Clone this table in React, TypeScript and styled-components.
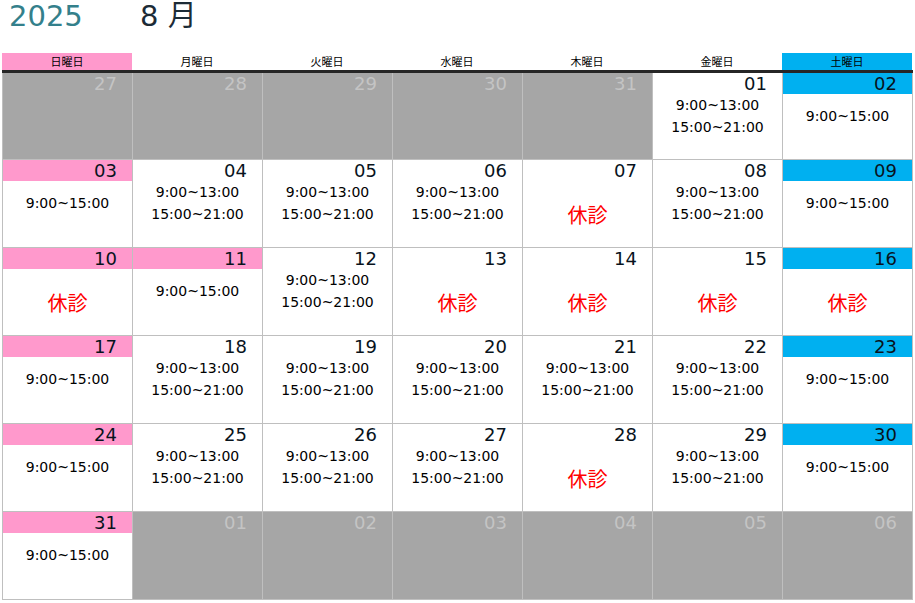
import React from "react";
import styled, { createGlobalStyle } from "styled-components";

const Global = createGlobalStyle`
  html, body { margin: 0; padding: 0; background: #ffffff; }
  body { font-family: "DejaVu Sans", "Noto Sans CJK JP", sans-serif; }
`;

const Page = styled.div`
  width: 915px;
  height: 603px;
  overflow: hidden;
  background: #fff;
`;

const Title = styled.div`
  height: 53px;
  display: flex;
  align-items: flex-start;
  padding-left: 9px;
  box-sizing: border-box;
`;

const Year = styled.span`
  font-family: "DejaVu Sans", sans-serif;
  font-size: 29px;
  line-height: 32px;
  color: #34808b;
  width: 131px;
`;

const Month = styled.span`
  font-family: "DejaVu Sans", "Noto Sans CJK JP", sans-serif;
  font-size: 29px;
  line-height: 32px;
  color: #1c2b36;
`;

const Calendar = styled.div`
  margin-left: 2px;
  width: 911px;
`;

const HeaderRow = styled.div`
  display: grid;
  grid-template-columns: repeat(7, 130px);
  height: 17px;
  border-bottom: 3px solid #262626;
`;

type Tone = "sun" | "sat" | "plain";

const toneBg = (t: Tone) => (t === "sun" ? "#ff99cc" : t === "sat" ? "#00b0f0" : "transparent");

const HeaderCell = styled.div<{ $tone: Tone }>`
  background: ${(p) => toneBg(p.$tone)};
  font-family: "Noto Sans CJK JP", sans-serif;
  font-size: 11px;
  line-height: 17px;
  text-align: center;
  color: #000;
`;

const Grid = styled.div`
  display: grid;
  grid-template-columns: repeat(7, 129px);
  grid-template-rows: 86px repeat(5, 87px);
  gap: 1px;
  background: #bfbfbf;
  border: 1px solid #bfbfbf;
  border-top: none;
`;

const Cell = styled.div<{ $out: boolean }>`
  background: ${(p) => (p.$out ? "#a6a6a6" : "#ffffff")};
  display: flex;
  flex-direction: column;
`;

const DayBand = styled.div<{ $tone: Tone; $out: boolean }>`
  height: 21px;
  background: ${(p) => (p.$out ? "transparent" : toneBg(p.$tone))};
  color: ${(p) => (p.$out ? "#c4c4c4" : "#08131c")};
  font-family: "DejaVu Sans", sans-serif;
  font-size: 18px;
  line-height: 21px;
  text-align: right;
  padding-right: 15px;
  flex-shrink: 0;
`;

const Times = styled.div`
  height: 44px;
  display: flex;
  flex-direction: column;
  justify-content: center;
  align-items: center;
  font-family: "DejaVu Sans", sans-serif;
  font-size: 14px;
  line-height: 22px;
  color: #000;
`;

const Closed = styled.div`
  flex: 1;
  display: flex;
  align-items: center;
  justify-content: center;
  font-family: "Noto Sans CJK JP", sans-serif;
  font-size: 20px;
  color: #ff0000;
`;

type Kind = "out" | "two" | "one" | "closed";
type Day = { n: string; k: Kind };

const weekdays: { label: string; tone: Tone }[] = [
  { label: "日曜日", tone: "sun" },
  { label: "月曜日", tone: "plain" },
  { label: "火曜日", tone: "plain" },
  { label: "水曜日", tone: "plain" },
  { label: "木曜日", tone: "plain" },
  { label: "金曜日", tone: "plain" },
  { label: "土曜日", tone: "sat" },
];

const d = (n: string, k: Kind): Day => ({ n, k });

const weeks: Day[][] = [
  [d("27", "out"), d("28", "out"), d("29", "out"), d("30", "out"), d("31", "out"), d("01", "two"), d("02", "one")],
  [d("03", "one"), d("04", "two"), d("05", "two"), d("06", "two"), d("07", "closed"), d("08", "two"), d("09", "one")],
  [d("10", "closed"), d("11", "one"), d("12", "two"), d("13", "closed"), d("14", "closed"), d("15", "closed"), d("16", "closed")],
  [d("17", "one"), d("18", "two"), d("19", "two"), d("20", "two"), d("21", "two"), d("22", "two"), d("23", "one")],
  [d("24", "one"), d("25", "two"), d("26", "two"), d("27", "two"), d("28", "closed"), d("29", "two"), d("30", "one")],
  [d("31", "one"), d("01", "out"), d("02", "out"), d("03", "out"), d("04", "out"), d("05", "out"), d("06", "out")],
];

// Monday 11 (holiday) gets the pink band
const toneFor = (wi: number, di: number): Tone => {
  if (wi === 2 && di === 1) return "sun";
  return weekdays[di].tone;
};

export default function App() {
  return (
    <Page>
      <Global />
      <Title>
        <Year>2025</Year>
        <Month>8 月</Month>
      </Title>
      <Calendar>
        <HeaderRow>
          {weekdays.map((w) => (
            <HeaderCell key={w.label} $tone={w.tone}>
              {w.label}
            </HeaderCell>
          ))}
        </HeaderRow>
        <Grid>
          {weeks.map((week, wi) =>
            week.map((day, di) => {
              const out = day.k === "out";
              return (
                <Cell key={`${wi}-${di}`} $out={out}>
                  <DayBand $tone={toneFor(wi, di)} $out={out}>
                    {day.n}
                  </DayBand>
                  {day.k === "two" && (
                    <Times>
                      <span>9:00~13:00</span>
                      <span>15:00~21:00</span>
                    </Times>
                  )}
                  {day.k === "one" && (
                    <Times>
                      <span>9:00~15:00</span>
                    </Times>
                  )}
                  {day.k === "closed" && <Closed>休診</Closed>}
                </Cell>
              );
            })
          )}
        </Grid>
      </Calendar>
    </Page>
  );
}
